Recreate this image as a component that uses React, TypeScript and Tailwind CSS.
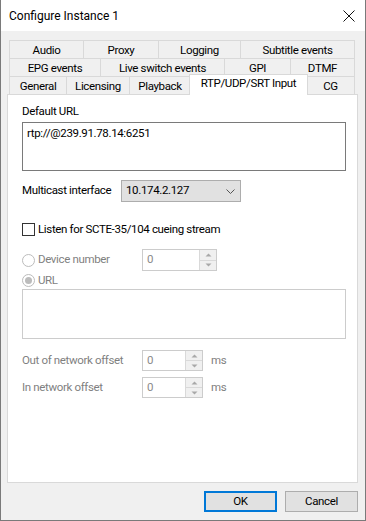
import React from 'react';

const font = { fontFamily: 'Roboto, "Segoe UI", sans-serif' };

function Tab({ label, w, selected }: { label: string; w: string; selected?: boolean }) {
  if (selected) {
    return (
      <div className={`relative h-[18px] ${w} shrink-0`}>
        <div className="absolute -top-[2px] -left-[2px] -right-[1px] -bottom-[1px] z-10 flex items-start justify-center border-x border-t border-[#d9d9d9] bg-white pt-[1px] leading-[15px]">
          {label}
        </div>
      </div>
    );
  }
  return (
    <div className={`flex h-[18px] ${w} shrink-0 items-center justify-center border-r border-t border-[#d9d9d9] bg-[#f0f0f0] pt-[2px] leading-[15px]`}>
      {label}
    </div>
  );
}

function SpinUp() {
  return (
    <svg width="7" height="4" viewBox="0 0 7 4">
      <path d="M0.5 3.5 L3.5 0.5 L6.5 3.5 Z" fill="#a8a8a8" />
    </svg>
  );
}

function SpinDown() {
  return (
    <svg width="7" height="4" viewBox="0 0 7 4">
      <path d="M0.5 0.5 L3.5 3.5 L6.5 0.5 Z" fill="#a8a8a8" />
    </svg>
  );
}

function Spin({ w, h }: { w: string; h: string }) {
  return (
    <div className={`flex ${w} ${h} border border-[#cccccc] bg-white`}>
      <div className="flex-1 pl-[4px] pt-[2px] leading-[15px] text-[#8a8a8a]">0</div>
      <div className="flex w-[17px] flex-col border-l border-[#d9d9d9]">
        <div className="flex flex-1 items-center justify-center border-b border-[#d9d9d9] bg-[#f0f0f0]">
          <SpinUp />
        </div>
        <div className="flex flex-1 items-center justify-center bg-[#f0f0f0]">
          <SpinDown />
        </div>
      </div>
    </div>
  );
}

export default function App() {
  return (
    <div className="flex h-[521px] w-[366px] flex-col whitespace-nowrap border-x border-b border-[#7a7a7a] bg-[#f0f0f0] text-[11.5px] tracking-[-0.35px] text-black" style={font}>
      {/* Title bar */}
      <div className="flex h-[31px] shrink-0 items-center justify-between bg-white pl-[8px] pr-[10px]">
        <span className="text-[12px] tracking-normal">Configure Instance 1</span>
        <svg width="12" height="12" viewBox="0 0 12 12">
          <path d="M0.5 0.5 L11.5 11.5 M11.5 0.5 L0.5 11.5" stroke="#111" strokeWidth="1" />
        </svg>
      </div>

      <div className="flex flex-col pl-[6px] pr-[7px] pt-[9px]">
        {/* Tabs */}
        <div className="ml-[2px] flex flex-col">
          <div className="flex border-l border-[#d9d9d9]">
            <Tab label="Audio" w="w-[74px]" />
            <Tab label="Proxy" w="w-[75px]" />
            <Tab label="Logging" w="w-[82px]" />
            <Tab label="Subtitle events" w="w-[114px]" />
          </div>
          <div className="flex border-l border-[#d9d9d9]">
            <Tab label="EPG events" w="w-[91px]" />
            <Tab label="Live switch events" w="w-[124px]" />
            <Tab label="GPI" w="w-[66px]" />
            <Tab label="DTMF" w="w-[64px]" />
          </div>
          <div className="flex border-l border-[#d9d9d9]">
            <Tab label="General" w="w-[57px]" />
            <Tab label="Licensing" w="w-[63px]" />
            <Tab label="Playback" w="w-[61px]" />
            <Tab label="RTP/UDP/SRT Input" w="w-[116px]" selected />
            <Tab label="CG" w="w-[48px]" />
          </div>
        </div>

        {/* Panel */}
        <div className="flex h-[389px] flex-col border border-[#d9d9d9] bg-white pl-[14px] pr-[11px]">
          <div className="mt-[9px] h-[15px] leading-[15px]">Default URL</div>
          <div className="mt-[3px] h-[49px] border border-[#7a7a7a] pl-[4px] pt-[3px] leading-[15px]">
            rtp://@239.91.78.14:6251
          </div>

          <div className="mt-[9px] flex h-[22px] items-center">
            <span className="w-[99px]">Multicast interface</span>
            <div className="flex h-[22px] w-[120px] items-center justify-between border border-[#adadad] bg-[#e1e1e1] pl-[4px] pr-[5px]">
              <span>10.174.2.127</span>
              <svg width="9" height="5" viewBox="0 0 9 5">
                <path d="M0.5 0.5 L4.5 4.5 L8.5 0.5" fill="none" stroke="#555" strokeWidth="1" />
              </svg>
            </div>
          </div>

          <div className="mt-[21px] flex h-[13px] items-center">
            <div className="h-[13px] w-[13px] shrink-0 border border-[#333333] bg-white" />
            <span className="ml-[3px]">Listen for SCTE-35/104 cueing stream</span>
          </div>

          <div className="mt-[13px] flex h-[22px] items-center text-[#7f7f7f]">
            <div className="h-[13px] w-[13px] shrink-0 rounded-full border border-[#bcbcbc] bg-white" />
            <span className="ml-[3px] w-[104px]">Device number</span>
            <Spin w="w-[75px]" h="h-[22px]" />
          </div>

          <div className="mt-[3px] flex h-[13px] items-center text-[#7f7f7f]">
            <div className="flex h-[13px] w-[13px] shrink-0 items-center justify-center rounded-full border border-[#bcbcbc] bg-white">
              <div className="h-[7px] w-[7px] rounded-full bg-[#bcbcbc]" />
            </div>
            <span className="ml-[3px]">URL</span>
          </div>

          <div className="mt-[2px] h-[50px] border border-[#cccccc]" />

          <div className="mt-[11px] flex h-[21px] items-center text-[#7f7f7f]">
            <span className="w-[120px]">Out of network offset</span>
            <Spin w="w-[61px]" h="h-[21px]" />
            <span className="ml-[8px]">ms</span>
          </div>

          <div className="mt-[6px] flex h-[21px] items-center text-[#7f7f7f]">
            <span className="w-[120px]">In network offset</span>
            <Spin w="w-[61px]" h="h-[21px]" />
            <span className="ml-[8px]">ms</span>
          </div>
        </div>

        {/* Buttons */}
        <div className="mt-[8px] flex justify-end gap-[8px]">
          <button className="h-[21px] w-[73px] border-2 border-[#0078d7] bg-[#e1e1e1] leading-[15px]">OK</button>
          <button className="h-[21px] w-[73px] border border-[#adadad] bg-[#e1e1e1] leading-[15px]">Cancel</button>
        </div>
      </div>
    </div>
  );
}
